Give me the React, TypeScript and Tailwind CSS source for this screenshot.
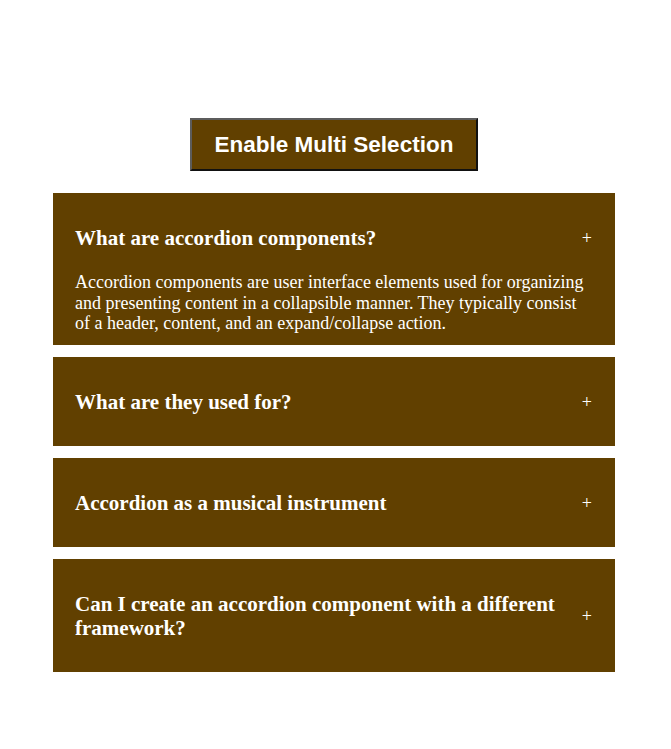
import { useState } from 'react';

const items = [
  {
    title: 'What are accordion components?',
    body: 'Accordion components are user interface elements used for organizing and presenting content in a collapsible manner. They typically consist of a header, content, and an expand/collapse action.',
  },
  {
    title: 'What are they used for?',
    body: 'They are commonly employed in various contexts, including FAQs, product descriptions, navigation menus, settings panels, and data tables.',
  },
  {
    title: 'Accordion as a musical instrument',
    body: 'The accordion is a musical instrument with a keyboard and bellows.',
  },
  {
    title: 'Can I create an accordion component with a different framework?',
    body: 'Yes of course, it is very possible to create an accordion component with another framework.',
  },
];

export default function App() {
  const [multi, setMulti] = useState(false);
  const [open, setOpen] = useState<number[]>([0]);

  const toggle = (i: number) => {
    if (multi) {
      setOpen(o => (o.includes(i) ? o.filter(x => x !== i) : [...o, i]));
    } else {
      setOpen(o => (o.includes(i) ? [] : [i]));
    }
  };

  return (
    <div className="min-h-[749px] bg-white pt-[118px] flex flex-col items-center" style={{ fontFamily: '"Liberation Serif", serif' }}>
      <button
        onClick={() => setMulti(m => !m)}
        className="bg-[#614000] text-white font-bold text-[22.5px] leading-[27px] px-[23px] py-[11px] border-2 border-t-[#5c5c5c] border-l-[#5c5c5c] border-b-[#111] border-r-[#111] ml-[-3px]"
        style={{ fontFamily: '"Liberation Sans", Arial, sans-serif' }}
      >
        Enable Multi Selection
      </button>

      <div className="w-[562px] mt-[22px] ml-[-3px] flex flex-col gap-[12px]">
        {items.map((it, i) => {
          const isOpen = open.includes(i);
          return (
            <div key={i} className="bg-[#614000] text-white">
              <div
                onClick={() => toggle(i)}
                className="flex items-center justify-between pl-[22px] pr-[23px] pt-[33px] pb-[32px] cursor-pointer"
              >
                <h3 className="font-bold text-[21px] leading-[24px] max-w-[500px]">{it.title}</h3>
                <span className="text-[18px] leading-none">+</span>
              </div>
              {isOpen && (
                <div className="px-[22px] pb-[11.5px] mt-[-10px] text-[18px] leading-[20.5px]">{it.body}</div>
              )}
            </div>
          );
        })}
      </div>
    </div>
  );
}
